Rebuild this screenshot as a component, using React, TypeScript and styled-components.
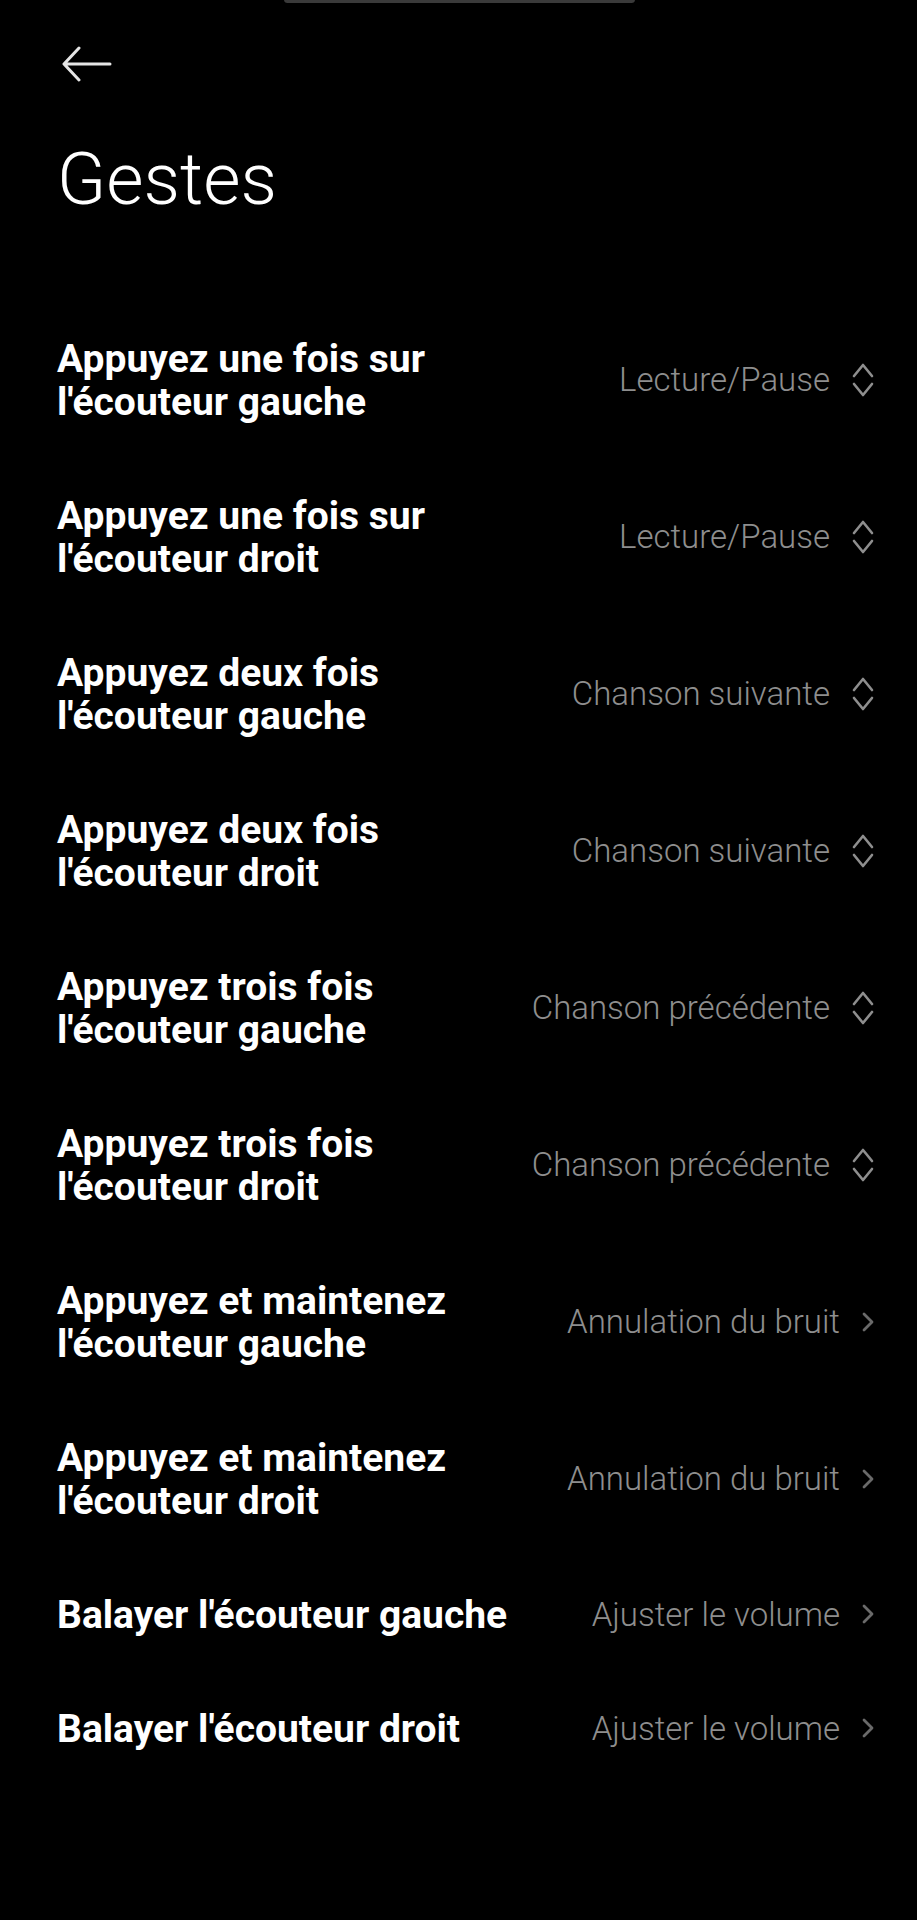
import React from 'react';
import styled, { createGlobalStyle } from 'styled-components';

type Control = 'select' | 'link';

interface Gesture {
  lines: string[];
  value: string;
  control: Control;
}

const gestures: Gesture[] = [
  { lines: ['Appuyez une fois sur', "l'écouteur gauche"], value: 'Lecture/Pause', control: 'select' },
  { lines: ['Appuyez une fois sur', "l'écouteur droit"], value: 'Lecture/Pause', control: 'select' },
  { lines: ['Appuyez deux fois', "l'écouteur gauche"], value: 'Chanson suivante', control: 'select' },
  { lines: ['Appuyez deux fois', "l'écouteur droit"], value: 'Chanson suivante', control: 'select' },
  { lines: ['Appuyez trois fois', "l'écouteur gauche"], value: 'Chanson précédente', control: 'select' },
  { lines: ['Appuyez trois fois', "l'écouteur droit"], value: 'Chanson précédente', control: 'select' },
  { lines: ['Appuyez et maintenez', "l'écouteur gauche"], value: 'Annulation du bruit', control: 'link' },
  { lines: ['Appuyez et maintenez', "l'écouteur droit"], value: 'Annulation du bruit', control: 'link' },
  { lines: ["Balayer l'écouteur gauche"], value: 'Ajuster le volume', control: 'link' },
  { lines: ["Balayer l'écouteur droit"], value: 'Ajuster le volume', control: 'link' },
];

const GlobalStyle = createGlobalStyle`
  html, body {
    margin: 0;
    padding: 0;
    background: #000;
  }
  body {
    font-family: Roboto, "Noto Sans", sans-serif;
  }
`;

const Page = styled.div`
  position: relative;
  width: 917px;
  min-height: 1920px;
  background: #000;
  color: #fff;
  display: flex;
  flex-direction: column;
`;

/* the sheet handle peeking in at the very top edge */
const Handle = styled.div`
  position: absolute;
  top: -4px;
  left: 284px;
  width: 351px;
  height: 7px;
  border-radius: 4px;
  background: #3a3a3a;
`;

const Header = styled.header`
  display: flex;
  flex-direction: column;
  align-items: flex-start;
  padding: 46px 0 0 62px;
`;

const BackButton = styled.button`
  display: flex;
  padding: 0;
  border: none;
  background: none;
  color: #e6e6e6;
  cursor: pointer;
`;

const Title = styled.h1`
  margin: 62px 0 0 -5px;
  font-size: 72px;
  line-height: 72px;
  font-weight: 300;
  color: #fff;
`;

const List = styled.div`
  display: flex;
  flex-direction: column;
  margin-top: 85px;
`;

const Row = styled.div`
  display: flex;
  align-items: center;
  justify-content: space-between;
  padding: 34px 43px 34px 57px;
  cursor: pointer;
`;

const Label = styled.div`
  display: flex;
  flex-direction: column;
  padding-top: 3px;
  font-size: 39px;
  line-height: 43px;
  font-weight: 700;
  color: #fff;
  white-space: nowrap;
`;

const Trailing = styled.div`
  display: flex;
  align-items: center;
  gap: 22px;
`;

const Value = styled.span`
  font-size: 33px;
  font-weight: 300;
  color: #8e8e8e;
  white-space: nowrap;
`;

const Icon = styled.svg<{ $tone: string }>`
  display: block;
  color: ${(p) => p.$tone};
  flex-shrink: 0;
`;

const BackArrow = () => (
  <svg width="50" height="36" viewBox="0 0 50 36" fill="none">
    <path
      d="M48 18H3M17 2L2 18l15 16"
      stroke="currentColor"
      strokeWidth="3"
      strokeLinecap="round"
      strokeLinejoin="round"
    />
  </svg>
);

const UpDown = () => (
  <Icon $tone="#8e8e8e" width="22" height="36" viewBox="0 0 22 36" fill="none">
    <path
      d="M2 14l9-11 9 11M2 22l9 11 9-11"
      stroke="currentColor"
      strokeWidth="2.6"
      strokeLinecap="round"
      strokeLinejoin="round"
    />
  </Icon>
);

const ChevronRight = () => (
  <Icon $tone="#6a6a6a" width="12" height="20" viewBox="0 0 12 20" fill="none">
    <path
      d="M2 2l8 8-8 8"
      stroke="currentColor"
      strokeWidth="2.8"
      strokeLinecap="round"
      strokeLinejoin="round"
    />
  </Icon>
);

function App() {
  return (
    <Page>
      <GlobalStyle />
      <Handle />
      <Header>
        <BackButton aria-label="Retour">
          <BackArrow />
        </BackButton>
        <Title>Gestes</Title>
      </Header>
      <List>
        {gestures.map((g, i) => (
          <Row key={i}>
            <Label>
              {g.lines.map((line) => (
                <span key={line}>{line}</span>
              ))}
            </Label>
            <Trailing>
              <Value>{g.value}</Value>
              {g.control === 'select' ? <UpDown /> : <ChevronRight />}
            </Trailing>
          </Row>
        ))}
      </List>
    </Page>
  );
}

export default App;
